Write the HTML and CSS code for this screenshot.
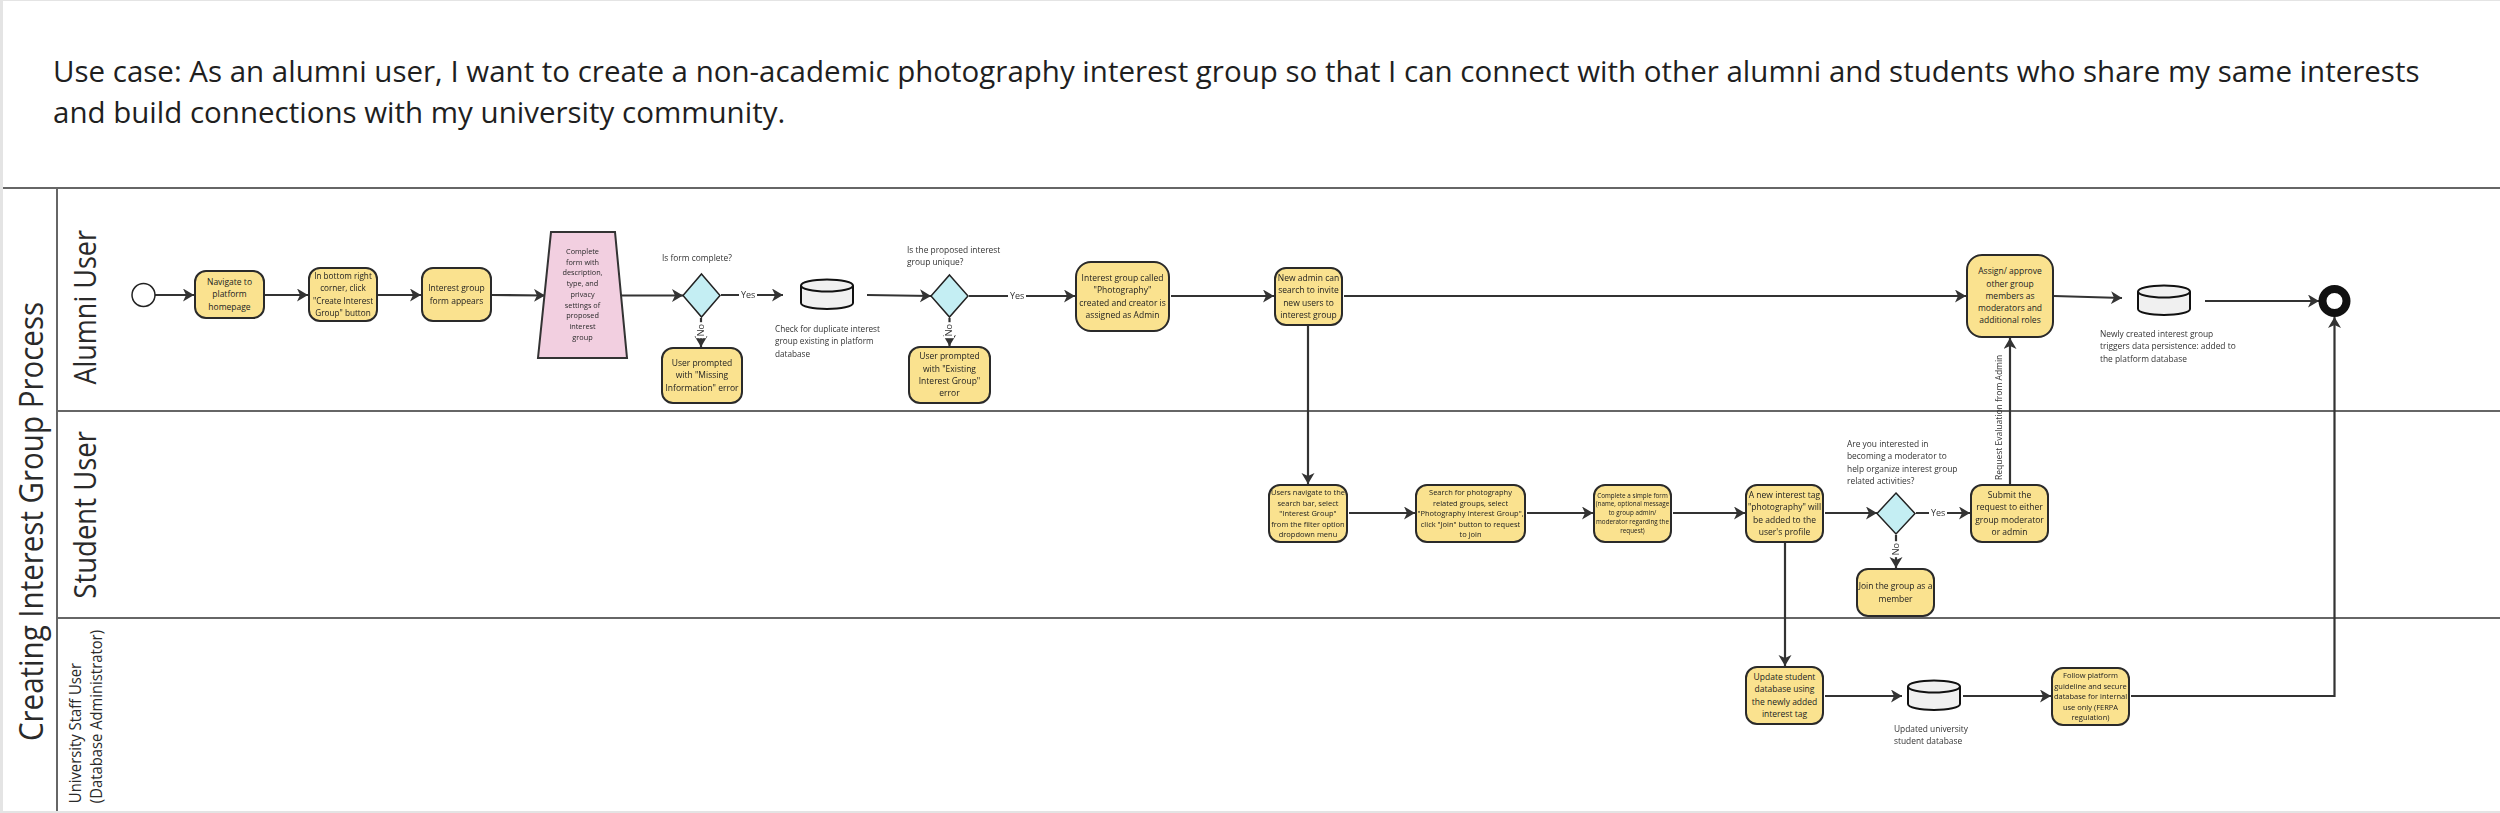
FILE: index.html
```html
<!DOCTYPE html>
<html lang="en">
<head>
<meta charset="utf-8">
<title>Creating Interest Group Process</title>
<link rel="stylesheet" href="styles.css">
</head>
<body>
<main class="page">
  <header class="usecase">
    <p class="usecase-text">Use case: As an alumni user, I want to create a non-academic photography interest group so that I can connect with other alumni and students who share my same interests<br>and build connections with my university community.</p>
  </header>
  <section class="pool">
    <h1 class="pool-title"><span>Creating Interest Group Process</span></h1>
    <div class="lanes">
      <div class="lane lane-alumni"><h2 class="lane-label"><span>Alumni User</span></h2></div>
      <div class="lane lane-student"><h2 class="lane-label"><span>Student User</span></h2></div>
      <div class="lane lane-staff"><h2 class="lane-label lane-label-small"><span>University Staff User<br>(Database Administrator)</span></h2></div>
    </div>
  </section>
</main>

<div class="canvas">
  <svg class="edges" width="2500" height="813" viewBox="0 0 2500 813" xmlns="http://www.w3.org/2000/svg">
    <defs>
      <marker id="head" markerUnits="userSpaceOnUse" markerWidth="14" markerHeight="14" refX="11" refY="6.5" orient="auto">
        <path d="M0 0 L11 6.5 L0 13 L3 6.5 Z" fill="#333"/>
      </marker>
    </defs>
    <g class="edge">
      <path marker-end="url(#head)" d="M155 295H194"/>
      <path marker-end="url(#head)" d="M265 295H308"/>
      <path marker-end="url(#head)" d="M378 295H421"/>
      <path marker-end="url(#head)" d="M492 295L545 295.5"/>
      <path marker-end="url(#head)" d="M621 295.500H683"/>
      <path marker-end="url(#head)" d="M721 295H783"/>
      <path marker-end="url(#head)" d="M701 318V347"/>
      <path marker-end="url(#head)" d="M867 295L931 296"/>
      <path marker-end="url(#head)" d="M969 296H1075"/>
      <path marker-end="url(#head)" d="M949.500 318V346"/>
      <path marker-end="url(#head)" d="M1171 296H1274"/>
      <path marker-end="url(#head)" d="M1344 296H1966"/>
      <path marker-end="url(#head)" d="M2054 296L2122 298"/>
      <path marker-end="url(#head)" d="M2205 301H2319"/>
      <path marker-end="url(#head)" d="M1308 326V484"/>
      <path marker-end="url(#head)" d="M1349 513H1415"/>
      <path marker-end="url(#head)" d="M1527 513H1593"/>
      <path marker-end="url(#head)" d="M1673 513H1745"/>
      <path marker-end="url(#head)" d="M1825 513H1877"/>
      <path marker-end="url(#head)" d="M1916 513H1970"/>
      <path marker-end="url(#head)" d="M1896 535V568"/>
      <path marker-end="url(#head)" d="M2010 484V338"/>
      <path marker-end="url(#head)" d="M1785 543V666"/>
      <path marker-end="url(#head)" d="M1825 696H1902"/>
      <path marker-end="url(#head)" d="M1963 696H2051"/>
      <path marker-end="url(#head)" d="M2131 696H2334.500V317"/>
    </g>
    <circle class="start" cx="143.500" cy="295" r="11.500"/>
    <circle class="end" cx="2334.500" cy="301" r="12"/>
    <polygon class="manual" points="551,232 615,232 627,358 538,358"/>
    <g class="gateway">
      <polygon points="701.500,274 720,295.500 701.500,317 683,295.500"/>
      <polygon points="949.500,275 968,296 949.500,317 931,296"/>
      <polygon points="1896,493 1915,513.500 1896,534 1877,513.500"/>
    </g>
    <g class="store">
      <path d="M801 285.500V303C801 306.500 813 309 827 309S853 306.500 853 303V285.500"/>
      <ellipse cx="827" cy="285.500" rx="26" ry="6"/>
      <path d="M2138 291.500V309C2138 312.500 2150 315 2164 315S2190 312.500 2190 309V291.500"/>
      <ellipse cx="2164" cy="291.500" rx="26" ry="6"/>
      <path d="M1908 686.500V704C1908 707.500 1920 710 1934 710S1960 707.500 1960 704V686.500"/>
      <ellipse cx="1934" cy="686.500" rx="26" ry="6"/>
    </g>
  </svg>

  <div class="task t-navigate">Navigate to<br>platform<br>homepage</div>
  <div class="task t-corner">In bottom right<br>corner, click<br>"Create Interest<br>Group" button</div>
  <div class="task t-form">Interest group<br>form appears</div>
  <div class="manual-text">Complete<br>form with<br>description,<br>type, and<br>privacy<br>settings of<br>proposed<br>interest<br>group</div>
  <div class="task t-missing">User prompted<br>with "Missing<br>Information" error</div>
  <div class="task t-existing">User prompted<br>with "Existing<br>Interest Group"<br>error</div>
  <div class="task t-photo">Interest group called<br>"Photography"<br>created and creator is<br>assigned as Admin</div>
  <div class="task t-admin">New admin can<br>search to invite<br>new users to<br>interest group</div>
  <div class="task t-assign">Assign/ approve<br>other group<br>members as<br>moderators and<br>additional roles</div>
  <div class="task t-users small">Users navigate to the<br>search bar, select<br>"Interest Group"<br>from the filter option<br>dropdown menu</div>
  <div class="task t-search small">Search for photography<br>related groups, select<br>"Photography Interest Group",<br>click "Join" button to request<br>to join</div>
  <div class="task t-simple tiny">Complete a simple form<br>(name, optional message<br>to group admin/<br>moderator regarding the<br>request)</div>
  <div class="task t-tag">A new interest tag<br>"photography" will<br>be added to the<br>user's profile</div>
  <div class="task t-submit">Submit the<br>request to either<br>group moderator<br>or admin</div>
  <div class="task t-join">Join the group as a<br>member</div>
  <div class="task t-update">Update student<br>database using<br>the newly added<br>interest tag</div>
  <div class="task t-follow small">Follow platform<br>guideline and secure<br>database for internal<br>use only (FERPA<br>regulation)</div>

  <p class="note n-complete">Is form complete?</p>
  <p class="note n-duplicate">Check for duplicate interest<br>group existing in platform<br>database</p>
  <p class="note n-unique">Is the proposed interest<br>group unique?</p>
  <p class="note n-persist">Newly created interest group<br>triggers data persistence: added to<br>the platform database</p>
  <p class="note n-moderator">Are you interested in<br>becoming a moderator to<br>help organize interest group<br>related activities?</p>
  <p class="note n-updated">Updated university<br>student database</p>

  <span class="flow flow-yes y-1">Yes</span>
  <span class="flow flow-yes y-2">Yes</span>
  <span class="flow flow-yes y-3">Yes</span>
  <span class="flow flow-no o-1">No</span>
  <span class="flow flow-no o-2">No</span>
  <span class="flow flow-no o-3">No</span>
  <span class="flow flow-request">Request Evaluation from Admin</span>
</div>
</body>
</html>
```

FILE: styles.css
```css
* { box-sizing: border-box; }

html, body { margin: 0; padding: 0; }

body {
  position: relative;
  width: 2500px;
  height: 813px;
  overflow: hidden;
  background: #e4e4e4;
  font-family: "Open Sans", "Noto Sans", sans-serif;
  color: #1f1f1f;
}

.page {
  display: flex;
  flex-direction: column;
  height: 810px;
  margin: 1px 0 0 3px;
  background: #fff;
}

.usecase {
  display: flex;
  align-items: center;
  height: 188px;
  padding: 0 0 6px 50px;
  border-bottom: 2px solid #666;
}

.usecase-text {
  margin: 0;
  font-size: 29.500px;
  line-height: 41px;
  white-space: nowrap;
}

.pool {
  display: flex;
  flex: 1;
  min-height: 0;
}

.pool-title,
.lane-label {
  display: flex;
  align-items: center;
  justify-content: center;
  margin: 0;
  color: #2a2a2a;
  font-weight: 400;
  white-space: nowrap;
}

.pool-title span,
.lane-label span {
  writing-mode: vertical-rl;
  transform: rotate(180deg) scaleX(1.140);
}

.pool-title {
  width: 55px;
  padding-top: 44px;
  border-right: 2px solid #666;
  font-size: 29.500px;
}

.lanes {
  display: flex;
  flex: 1;
  flex-direction: column;
  min-height: 0;
}

.lane { display: flex; flex: none; border-bottom: 2px solid #666; }
.lane-alumni { height: 223px; }
.lane-student { height: 207px; }
.lane-staff { flex: 1; min-height: 0; border-bottom: 0; }

.lane-label {
  width: 54px;
  font-size: 27.500px;
  line-height: 40px;
}

.lane-alumni .lane-label { padding-top: 15px; font-size: 27px; }

.lane-label-small {
  width: 52px;
  padding-top: 4px;
  font-size: 14.800px;
  line-height: 18.500px;
}

/* Free diagram canvas: coordinates below are the diagram's own */
.canvas {
  position: absolute;
  left: 0;
  top: 0;
  width: 2500px;
  height: 813px;
  filter: blur(0.35px);
}

.edges { position: absolute; left: 0; top: 0; }
.edge path { fill: none; stroke: #333; stroke-width: 2.200; }
.start { fill: #fff; stroke: #222; stroke-width: 1.500; }
.end { fill: #fff; stroke: #111; stroke-width: 8; }
.manual { fill: #f2cfe0; stroke: #333; stroke-width: 2; }
.gateway polygon { fill: #c4eef3; stroke: #222; stroke-width: 1.500; }
.store path, .store ellipse { fill: #f0f0f0; stroke: #111; stroke-width: 2; }

.task {
  position: absolute;
  display: flex;
  align-items: center;
  justify-content: center;
  border: 2px solid #2a2a2a;
  border-radius: 12px;
  background: #fae28f;
  color: #222;
  font-size: 8.500px;
  line-height: 12.300px;
  text-align: center;
  white-space: nowrap;
}

.task.small { font-size: 7.500px; line-height: 10.500px; }
.task.tiny { font-size: 6.300px; line-height: 8.700px; }

.t-navigate { left: 194px; top: 270px; width: 71px; height: 49px; }
.t-corner { left: 308px; top: 267px; width: 70px; height: 55px; font-size: 8.200px; }
.t-form { left: 421px; top: 267px; width: 71px; height: 55px; }
.t-missing { left: 661px; top: 347px; width: 82px; height: 57px; }
.t-existing { left: 908px; top: 346px; width: 83px; height: 58px; }
.t-photo { left: 1075px; top: 261px; width: 95px; height: 71px; border-radius: 16px; }
.t-admin { left: 1274px; top: 267px; width: 69px; height: 59px; }
.t-assign { left: 1966px; top: 254px; width: 88px; height: 84px; border-radius: 16px; }
.t-users { left: 1268px; top: 484px; width: 80px; height: 59px; }
.t-search { left: 1415px; top: 484px; width: 111px; height: 59px; }
.t-simple { left: 1593px; top: 484px; width: 79px; height: 59px; }
.t-tag { left: 1745px; top: 484px; width: 79px; height: 59px; }
.t-submit { left: 1970px; top: 484px; width: 79px; height: 59px; }
.t-join { left: 1856px; top: 568px; width: 79px; height: 49px; }
.t-update { left: 1745px; top: 666px; width: 79px; height: 59px; }
.t-follow { left: 2051px; top: 667px; width: 79px; height: 59px; }

.manual-text {
  position: absolute;
  left: 538px;
  top: 246px;
  width: 89px;
  color: #2a2a2a;
  font-size: 7.300px;
  line-height: 10.700px;
  text-align: center;
}

.note {
  position: absolute;
  margin: 0;
  color: #333;
  font-size: 8.400px;
  line-height: 12.300px;
  white-space: nowrap;
}

.n-complete { left: 662px; top: 252px; }
.n-duplicate { left: 775px; top: 323px; font-size: 8.200px; }
.n-unique { left: 907px; top: 244px; }
.n-persist { left: 2100px; top: 328px; }
.n-moderator { left: 1847px; top: 438px; }
.n-updated { left: 1894px; top: 723px; }

.flow {
  position: absolute;
  color: #333;
  font-size: 9px;
  line-height: 10px;
  white-space: nowrap;
}

.flow-yes { padding: 0 2px; background: #fff; }
.flow-no {
  padding: 2px 0;
  background: #fff;
  writing-mode: vertical-rl;
  transform: rotate(180deg);
}

.y-1 { left: 739px; top: 290px; }
.y-2 { left: 1008px; top: 291px; }
.y-3 { left: 1929px; top: 508px; }
.o-1 { left: 696px; top: 322px; }
.o-2 { left: 944px; top: 322px; }
.o-3 { left: 1891px; top: 541px; }

.flow-request {
  left: 1994px;
  top: 353px;
  height: 127px;
  font-size: 8.500px;
  writing-mode: vertical-rl;
  transform: rotate(180deg);
  text-align: left;
}
```
